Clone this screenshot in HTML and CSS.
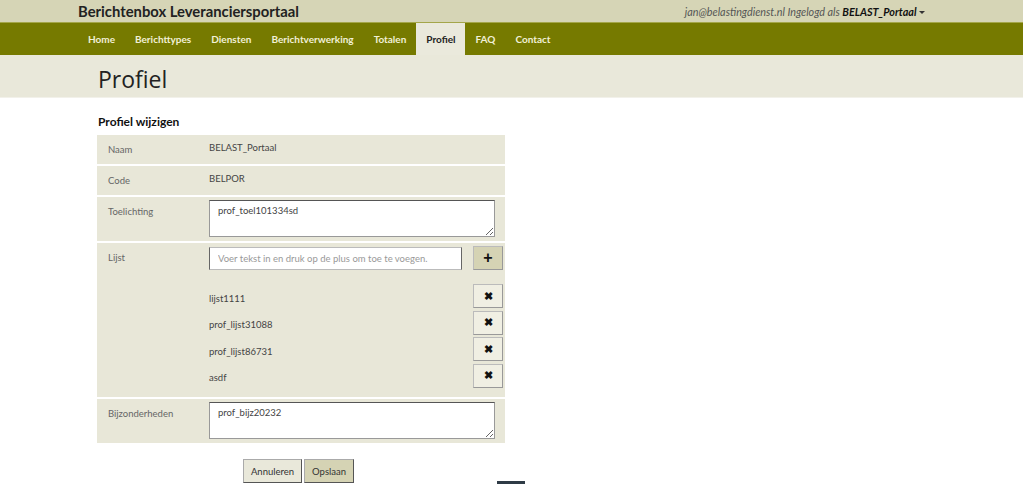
FILE: index.html
```html
<!DOCTYPE html>
<html lang="nl">
<head>
    <meta charset="UTF-8">
    <title>Profiel - Berichtenbox Leveranciersportaal</title>
    <link rel="stylesheet" href="styles.css">
</head>
<body>
    <div class="topbar">
        <div class="container topbar-inner">
            <div class="brand">Berichtenbox Leveranciersportaal</div>
            <div class="user">jan@belastingdienst.nl Ingelogd als <b>BELAST_Portaal</b> <span class="caret"></span></div>
        </div>
    </div>
    <div class="mainnav">
        <ul class="container nav-list">
            <li><a href="#">Home</a></li>
            <li><a href="#">Berichttypes</a></li>
            <li><a href="#">Diensten</a></li>
            <li><a href="#">Berichtverwerking</a></li>
            <li><a href="#">Totalen</a></li>
            <li class="active"><a href="#">Profiel</a></li>
            <li><a href="#">FAQ</a></li>
            <li><a href="#">Contact</a></li>
        </ul>
    </div>
    <div class="pagehead">
        <div class="container">
            <h1>Profiel</h1>
        </div>
    </div>

    <div class="container content">
        <h2>Profiel wijzigen</h2>
        <div class="form">
            <div class="row">
                <div class="label">Naam</div>
                <div class="value">BELAST_Portaal</div>
            </div>
            <div class="row">
                <div class="label">Code</div>
                <div class="value">BELPOR</div>
            </div>
            <div class="row row-field">
                <div class="label">Toelichting</div>
                <div class="value"><textarea class="area">prof_toel101334sd</textarea></div>
            </div>
            <div class="row row-field">
                <div class="label">Lijst</div>
                <div class="value">
                    <div class="add-line">
                        <input class="text" type="text" placeholder="Voer tekst in en druk op de plus om toe te voegen.">
                        <button class="icon-btn add">+</button>
                    </div>
                    <ul class="items">
                        <li><span>lijst1111</span><button class="icon-btn">&#x2716;</button></li>
                        <li><span>prof_lijst31088</span><button class="icon-btn">&#x2716;</button></li>
                        <li><span>prof_lijst86731</span><button class="icon-btn">&#x2716;</button></li>
                        <li><span>asdf</span><button class="icon-btn">&#x2716;</button></li>
                    </ul>
                </div>
            </div>
            <div class="row row-field">
                <div class="label">Bijzonderheden</div>
                <div class="value"><textarea class="area">prof_bijz20232</textarea></div>
            </div>
        </div>
        <div class="actions">
            <button class="btn">Annuleren</button>
            <button class="btn primary">Opslaan</button>
        </div>
        <div class="totop"></div>
    </div>
</body>
</html>
```

FILE: styles.css
```css
body {
    margin: 0;
    background-color: #fff;
    font-family: Lato, "Open Sans", sans-serif;
    color: #333;
}
.container {
    width: 867px;
    margin: 0 auto;
    box-sizing: border-box;
}
.topbar {
    background-color: #d6d5b6;
    height: 22px;
}
.topbar-inner {
    display: flex;
    justify-content: space-between;
    align-items: center;
    height: 22px;
}
.brand {
    font-size: 14.8px;
    font-weight: bold;
    color: #222;
}
.user {
    font-size: 10.8px;
    font-style: italic;
    color: #555;
    padding-right: 20px;
}
.user b {
    color: #111;
}
.caret {
    display: inline-block;
    border-top: 3px solid #333;
    border-left: 3px solid transparent;
    border-right: 3px solid transparent;
    vertical-align: middle;
}
.mainnav {
    background-color: #767a00;
    border-top: 1px solid #a4a64a;
}
.nav-list {
    list-style: none;
    padding: 0;
    margin: 0 auto;
    display: flex;
    height: 32px;
}
.nav-list a {
    display: block;
    padding: 0 10px;
    line-height: 32px;
    font-size: 10px;
    font-weight: bold;
    color: #f1f0d6;
    text-decoration: none;
}
.nav-list .active a {
    background-color: #eae9dc;
    color: #222;
}
.pagehead {
    background-color: #e9e8da;
    height: 42px;
    border-bottom: 1px solid #f2f1ea;
}
.pagehead h1 {
    margin: 0;
    padding-left: 20px;
    font-family: "Open Sans", sans-serif;
    font-weight: normal;
    font-size: 23px;
    line-height: 48px;
    color: #222;
}
.content {
    padding-left: 19px;
}
h2 {
    margin: 16px 0 6px 1px;
    font-size: 12px;
    font-weight: bold;
    color: #111;
}
.form {
    width: 408px;
    font-size: 9.5px;
}
.row {
    display: flex;
    background-color: #e8e7d8;
    border-bottom: 2px solid #fff;
    min-height: 29px;
}
.label {
    width: 101px;
    padding: 9px 0 0 11px;
    color: #666;
}
.value {
    flex: 1;
    padding-top: 7px;
    color: #444;
}
.row-field .value {
    padding: 3px 0 4px 0;
}
.row-field .label {
    padding-top: 9px;
}
.area {
    display: block;
    width: 286px;
    height: 37px;
    box-sizing: border-box;
    border: 1px solid #999;
    border-top-color: #555;
    padding: 4px 8px;
    font-family: Lato, sans-serif;
    font-size: 9.5px;
    color: #444;
    resize: vertical;
}
.add-line {
    display: flex;
    align-items: center;
    gap: 11px;
}
.text {
    width: 253px;
    height: 23px;
    box-sizing: border-box;
    border: 1px solid #bbb;
    border-left-color: #666;
    border-right-color: #666;
    padding: 0 8px;
    font-family: Lato, sans-serif;
    font-size: 9.5px;
}
.text::placeholder {
    color: #999;
}
.icon-btn {
    width: 30px;
    height: 24px;
    border: 1px solid #bbb;
    border-bottom-color: #999;
    border-right-color: #999;
    background-color: #f0efe3;
    font-size: 11px;
    font-weight: bold;
    color: #111;
    padding: 0;
}
.icon-btn.add {
    background-color: #d5d3b4;
    font-size: 16px;
    line-height: 20px;
}
.items {
    list-style: none;
    margin: 14px 0 5px 0;
    padding: 0;
}
.items li {
    display: flex;
    justify-content: space-between;
    align-items: center;
    width: 294px;
    margin-bottom: 2px;
    height: 24.5px;
}
.items li span {
    padding-top: 4px;
}
.actions {
    width: 408px;
    display: flex;
    justify-content: center;
    gap: 2px;
    margin-top: 14px;
    padding-right: 5px;
    box-sizing: border-box;
}
.btn {
    height: 24px;
    padding: 0 7px;
    border: 1px solid #aaa;
    border-right-color: #555;
    border-bottom-color: #555;
    background-color: #e9e8da;
    font-family: Lato, sans-serif;
    font-size: 9.5px;
    color: #333;
}
.btn.primary {
    background-color: #d5d3b4;
}
.totop {
    width: 28px;
    height: 4px;
    background-color: #2f3b46;
    margin: -2px 0 0 400px;
}
```
